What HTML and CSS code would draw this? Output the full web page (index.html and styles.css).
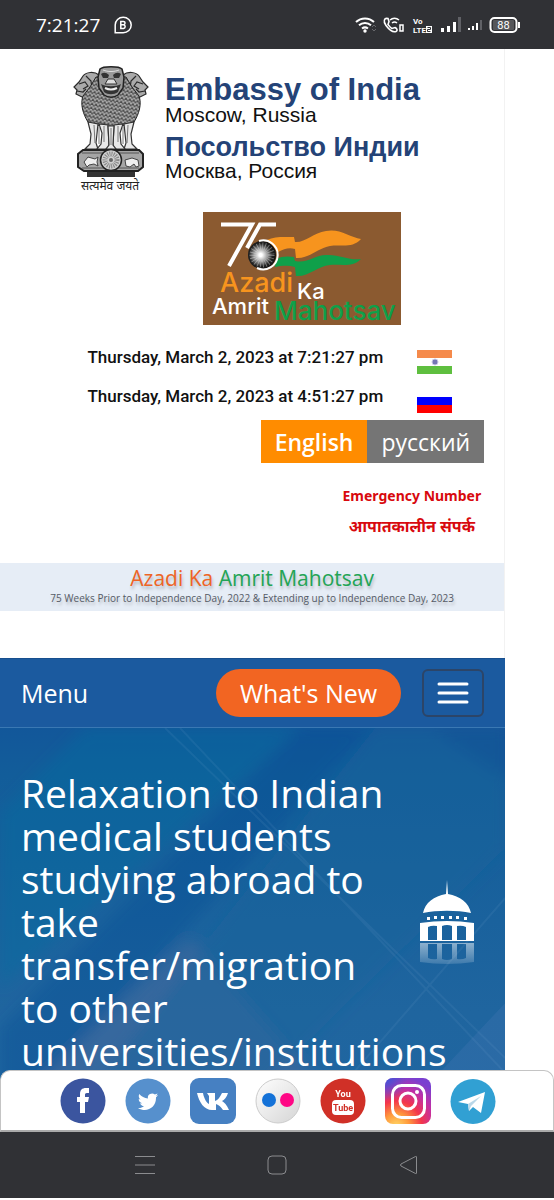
FILE: index.html
```html
<!DOCTYPE html>
<html lang="en">
<head>
    <meta charset="UTF-8">
    <meta name="viewport" content="width=device-width, initial-scale=1.0">
    <title>Embassy of India, Moscow</title>
    <link rel="stylesheet" href="styles.css">
</head>
<body>

    <!-- Status bar -->
    <div class="status-bar">
        <div class="status-left">
            <span class="status-time">7:21:27</span>
            <svg width="18" height="18" viewBox="0 0 18 18" fill="none" stroke="#fff" stroke-width="1.5">
                <path d="M1.2 16.8V9a8 7.8 0 1 1 8 7.8z"/>
                <path d="M6.8 5.400v7h2.900a1.900 1.900 0 0 0 0-3.700H6.800h2.600a1.600 1.600 0 0 0 0-3.300z"/>
            </svg>
        </div>
        <svg width="165" height="18" viewBox="0 0 165 18">
            <g fill="none" stroke="#fff" stroke-width="2">
                <path d="M1 6a13 13 0 0 1 18 0M4 9.300a9 9 0 0 1 12 0M7 12.500a5 5 0 0 1 6 0"/>
                <path d="M33 2.500c-4-1-5 3-2 7s7 7 10 6c2-1 1-3-1-4l-3 1c-2-1-3-3-4-4l1-3z" stroke-width="1.600"/>
                <path d="M35 4a7 7 0 0 1 9 0M37 7a4 4 0 0 1 5 0" stroke-width="1.500"/>
                <rect x="45" y="9" width="3" height="6" stroke-width="1.500"/>
                <rect x="135.500" y="2" width="26" height="14" rx="4"/>
            </g>
            <circle cx="10" cy="15" r="1.700" fill="#fff"/>
            <path d="M17 11l2-2 2 2M17 13l2 2 2-2" fill="none" stroke="#66676b"/>
            <g fill="#fff" class="tiny-bold">
                <text x="58" y="8">Vo</text>
                <text x="58" y="17">LTE</text>
                <rect x="71" y="10" width="6" height="7"/>
            </g>
            <path d="M72.500 11.500h3v2h-3v2h3" fill="none" stroke="#303135"/>
            <path d="M86 12h3v4h-3zM92 10h3v6h-3zM98 6h3v10h-3zM113 12h2v2h-2zM117 10h2v4h-2zM121 7h2v7h-2zM163 6h2v6h-2z" fill="#fff"/>
            <path d="M103 1h3v15h-3zM125 4h2v10h-2z" fill="#606166"/>
            <rect x="138" y="4" width="21" height="10" rx="1" fill="#55565a"/>
            <text class="battery" x="148.500" y="13" text-anchor="middle">88</text>
        </svg>
    </div>

    <main class="site">
        <header class="header">
            <div class="brand">
                <!-- State emblem -->
                <svg class="emblem" width="78" height="130" viewBox="0 0 78 130">
                    <defs>
                        <pattern id="mane" width="4" height="4" patternUnits="userSpaceOnUse" patternTransform="rotate(12)">
                            <rect width="4" height="4" fill="#4a4a4a"/>
                            <path d="M0 0l2 3 2-3" fill="none" stroke="#b5b5b5" stroke-width="1.200"/>
                        </pattern>
                    </defs>
                    <!-- side heads -->
                    <g fill="#aaa" stroke="#2a2a2a" stroke-width="1.200">
                        <path d="M27 11c-5-4-13-3-16 1l-4 6-5 5 3 3-1 4 6 3 9 2 9-6z"/>
                        <path d="M51 11c5-4 13-3 16 1l4 6 5 5-3 3 1 4-6 3-9 2-9-6z"/>
                        <path d="M7 20l6-2 3 4-5 3M71 20l-6-2-3 4 5 3M5 27l6 1 3-3M73 27l-6 1-3-3M14 12l5 5 1 8-3 6M64 12l-5 5-1 8 3 6" fill="none"/>
                    </g>
                    <!-- body and centre head -->
                    <path d="M24 13l-6 10-7 9c-3 8 0 18 5 26l8 3 15 2 15-2 8-3c5-8 8-18 5-26l-7-9-6-10z" fill="url(#mane)" stroke="#222"/>
                    <path d="M28 5c3-3 19-3 22 0l2 8-1 11-5 7c-4 3-10 3-14 0l-5-7-1-11z" fill="#999" stroke="#222" stroke-width="1.500"/>
                    <path d="M29 10q4-3 8 1l-1 3h-5zM49 10q-4-3-8 1l1 3h5z" fill="#333"/>
                    <path d="M36 15h6l3 5h-12z" fill="#ddd" stroke="#333"/>
                    <path d="M29 20c5 3 15 3 20 0l-3 8c-4 3-10 3-14 0z" fill="#333"/>
                    <path d="M33 24c4 2 8 2 12 0" stroke="#eee" stroke-width="2" fill="none"/>
                    <path d="M31 6c5 2 11 2 16 0" stroke="#ddd" fill="none"/>
                    <!-- legs -->
                    <g fill="#e8e8e8" stroke="#333" stroke-width="1.200">
                        <path d="M16 58l3 12-1 10-5 5h13l-2-6 2-19zM62 58l-3 12 1 10 5 5H52l2-6-2-19z"/>
                        <path d="M27 60l3 9-1 11-4 5h11l1-4-1-20zM51 60l-3 9 1 11 4 5H42l-1-4 1-20z"/>
                        <path d="M36 62l1 19-3 4h10l-3-4 1-19z"/>
                    </g>
                    <path d="M22 61l1 18M56 61l-1 18M32 62v16M46 62v16M39 64v17M27 62v18M51 62v18" stroke="#777"/>
                    <!-- abacus -->
                    <path d="M11 86h56l4 4v13l-5 4H12l-6-4V90z" fill="#a5a5a5" stroke="#222" stroke-width="2"/>
                    <path d="M10 89h57M10 104h57" stroke="#555"/>
                    <path d="M12 98l4-5 7 2 3-2-1 5 1 4-4-2-5 1-2 2zM54 102l-1-6 7-2 6 2 1 6-3 1-2-3-4 3z" fill="#eee" stroke="#444"/>
                    <circle cx="39" cy="96" r="10.500" fill="#d0d0d0" stroke="#222" stroke-width="1.500"/>
                    <circle cx="39" cy="96" r="6" fill="none" stroke="#888" stroke-width="5" stroke-dasharray="1 1"/>
                    <circle cx="39" cy="96" r="2" fill="#666"/>
                    <path d="M15 108h48v5H15z" fill="#333"/>
                    <text class="motto" x="38" y="126" text-anchor="middle">सत्यमेव जयते</text>
                </svg>
                <div class="brand-text">
                    <h1 class="brand-en">Embassy of India</h1>
                    <p class="brand-city">Moscow, Russia</p>
                    <h2 class="brand-ru" lang="ru">Посольство Индии</h2>
                    <p class="brand-city" lang="ru">Москва, Россия</p>
                </div>
            </div>

            <!-- 75 years logo -->
            <svg class="azadi-logo" width="198" height="113" viewBox="0 0 198 113">
                <defs>
                    <radialGradient id="wheel" cx="0.450" cy="0.500" r="0.550">
                        <stop offset="0.100" stop-color="#fff"/>
                        <stop offset="0.400" stop-color="#aaa"/>
                        <stop offset="0.750" stop-color="#222"/>
                        <stop offset="1" stop-color="#111"/>
                    </radialGradient>
                </defs>
                <rect width="198" height="113" fill="#8b5a30"/>
                <path d="M64 28c8-4 18-3 27-3l1 5c10 1 18-9 31-11 13-3 24 6 35 8-9 10-20 5-31 7-12 2-21 13-34 12l-1-9c-6-2-11 0-17 3z" fill="#f7941e"/>
                <path d="M73 47c6-3 12-3 18-2l1 4c12 3 20-6 31-6 13-1 24 6 35 4-9 9-20 5-31 6-13 1-21 12-34 11l-1-9c-7-2-14-1-20 0z" fill="#0fa04a"/>
                <circle cx="59" cy="43" r="14" fill="url(#wheel)"/>
                <g fill="none" stroke="#fff">
                    <circle cx="59" cy="43" r="9" stroke-width="7" stroke-dasharray="0.700 1.800" opacity="0.400"/>
                    <path d="M18 12.500h31L26 54M73 12.500H57L44 36" stroke-width="4"/>
                    <path d="M56 29a14.500 14.500 0 1 1-2 27" stroke-width="2"/>
                </g>
                <g class="azadi-text">
                    <text class="word-azadi" x="17" y="80">Azadi</text>
                    <text class="word-ka" x="94" y="87">Ka</text>
                    <text class="word-amrit" x="9" y="102">Amrit</text>
                    <text class="word-mahotsav" x="71" y="108">Mahotsav</text>
                </g>
            </svg>

            <div class="clocks">
                <div class="clock">
                    <time>Thursday, March 2, 2023 at 7:21:27 pm</time>
                    <svg width="35" height="24" viewBox="0 0 35 24">
                        <path d="M0 0h35v8H0z" fill="#f58a4b"/>
                        <path d="M0 16h35v8H0z" fill="#5fbf3f"/>
                        <circle cx="18" cy="12" r="3" fill="#7676b5" stroke="#c9c9e6"/>
                    </svg>
                </div>
                <div class="clock">
                    <time>Thursday, March 2, 2023 at 4:51:27 pm</time>
                    <svg width="35" height="24" viewBox="0 0 35 24">
                        <path d="M0 8h35v8H0z" fill="#00f"/>
                        <path d="M0 16h35v8H0z" fill="#f00"/>
                    </svg>
                </div>
            </div>

            <div class="languages">
                <button type="button" class="lang active">English</button>
                <button type="button" class="lang" lang="ru">русский</button>
            </div>

            <div class="emergency">
                <a href="#">Emergency Number</a>
                <a href="#" class="hindi" lang="hi">आपातकालीन संपर्क</a>
            </div>
        </header>

        <section class="banner">
            <h2><span class="orange">Azadi Ka</span> <span class="green">Amrit Mahotsav</span></h2>
            <p>75 Weeks Prior to Independence Day, 2022 &amp; Extending up to Independence Day, 2023</p>
        </section>

        <nav class="navbar">
            <span class="nav-title">Menu</span>
            <a href="#" class="whats-new">What's New</a>
            <button type="button" class="toggler" aria-label="Toggle navigation">
                <svg width="32" height="24" viewBox="0 0 32 24" stroke="#fff" stroke-width="3" stroke-linecap="round">
                    <path d="M2 3h28M2 12h28M2 21h28"/>
                </svg>
            </button>
        </nav>

        <section class="hero">
            <svg class="hero-bg" viewBox="0 0 505 360" preserveAspectRatio="none">
                <defs>
                    <filter id="soft"><feGaussianBlur stdDeviation="7"/></filter>
                </defs>
                <g filter="url(#soft)">
                    <path d="M85 0h215L0 260V85z" fill="#0e6da0" opacity="0.350"/>
                    <path d="M300 0h70L40 360H0v-60z" fill="#104a91" opacity="0.300"/>
                    <path d="M0 390l190-180 160 180z" fill="#6a6d9d" opacity="0.300"/>
                    <path d="M375 0h130v120L260 360H90z" fill="#17649b" opacity="0.400"/>
                    <path d="M430 0h90v60z" fill="#104a91" opacity="0.350"/>
                </g>
                <path d="M505 275v85h-80z" fill="#5c83bd" opacity="0.200"/>
                <path d="M165 0l340 330M180 0l325 345M505 170L340 360" fill="none" stroke="#8ab3d5" stroke-width="2" opacity="0.100"/>
            </svg>
            <h2>Relaxation to Indian medical students studying abroad to take transfer/migration to other universities/institutions</h2>
            <svg class="dome" width="54" height="84" viewBox="0 0 54 84">
                <defs>
                    <linearGradient id="fade" x1="0" y1="0" x2="0" y2="1">
                        <stop offset="0" stop-color="#fff" stop-opacity="0.500"/>
                        <stop offset="1" stop-color="#fff" stop-opacity="0.150"/>
                    </linearGradient>
                </defs>
                <path d="M27 0l1 14c12 2 21 9 23 19-14-3-34-3-48 0 2-10 11-17 23-19z" fill="#fff"/>
                <path d="M7 37h3v3H7zM14 36h3v3h-3zM21 36h3v3h-3zM29 36h3v3h-3zM36 36h3v3h-3zM44 37h3v3h-3z" fill="#fff"/>
                <path fill-rule="evenodd" d="M0 43q27-4 54 0v18H0zM8 60h9V46q-5-1-9 1zM22 60h10V46q-5-2-10 0zM37 60h9V47q-4-2-9-1z" fill="#fff"/>
                <path fill-rule="evenodd" d="M0 63h54v19q-27 4-54 0zM8 64v14q4 2 9 1V64zM22 64v15q5 2 10 0V64zM37 64v15q5 1 9-1V64z" fill="url(#fade)"/>
            </svg>
        </section>
    </main>

    <footer class="bottom">
        <div class="social">
            <a href="#" aria-label="Facebook">
                <svg width="46" height="46" viewBox="0 0 46 46">
                    <circle cx="23" cy="23" r="22.500" fill="#3b559f"/>
                    <path d="M20 35V24h-3v-5h3v-3c0-4 2-6 6-6h3v5h-2c-2 0-2 1-2 2v2h4l-1 5h-3v11z" fill="#fff"/>
                </svg>
            </a>
            <a href="#" aria-label="Twitter">
                <svg width="46" height="46" viewBox="0 0 46 46">
                    <circle cx="23" cy="23" r="22.500" fill="#5690cd"/>
                    <path d="M33 17c-1 .5-1.500.7-2.300.8 1-.6 1.500-1.300 1.800-2.200-.8.500-1.700.8-2.600 1a4.200 4.200 0 0 0-7 3.800c-3.500-.2-6.500-1.800-8.600-4.400-1 2-.6 4.300 1.300 5.600-.7 0-1.300-.2-1.900-.5 0 2 1.400 3.700 3.300 4.200-.6.100-1.300.1-1.900 0 .6 1.700 2 2.800 3.900 2.900-1.700 1.300-3.700 1.900-6 1.700 8 5 18 .4 18-9.800v-.8c.9-.7 1.500-1.400 2-2.300z" fill="#fff"/>
                </svg>
            </a>
            <a href="#" aria-label="VK">
                <svg width="46" height="46" viewBox="0 0 46 46">
                    <rect width="46" height="46" rx="9" fill="#4680c2"/>
                    <path d="M22 32C14 32 9 24 7 15h6c1 6 4 10 6 11v-8l-2-3h8v8c3-1 5-4 7-8h6c-1 4-4 7-6 8 2 1 5 4 7 9h-6c-2-3-4-5-7-6v6z" fill="#fff"/>
                </svg>
            </a>
            <a href="#" aria-label="Flickr">
                <svg width="46" height="46" viewBox="0 0 46 46">
                    <defs>
                        <linearGradient id="silver" x1="0" y1="0" x2="1" y2="1">
                            <stop offset="0" stop-color="#fff"/>
                            <stop offset="1" stop-color="#d5d5d5"/>
                        </linearGradient>
                    </defs>
                    <circle cx="23" cy="23" r="22" fill="url(#silver)" stroke="#ccc"/>
                    <circle cx="14" cy="22" r="7" fill="#1472d8"/>
                    <circle cx="32" cy="22" r="7" fill="#ff0785"/>
                </svg>
            </a>
            <a href="#" aria-label="YouTube">
                <svg width="46" height="46" viewBox="0 0 46 46">
                    <circle cx="23" cy="23" r="22.500" fill="#d03027"/>
                    <rect x="12" y="22" width="22" height="15" rx="4" fill="#fff"/>
                    <text class="yt" x="23" y="19" text-anchor="middle" fill="#fff">You</text>
                    <text class="yt" x="23" y="33" text-anchor="middle" fill="#d03027">Tube</text>
                </svg>
            </a>
            <a href="#" aria-label="Instagram">
                <svg width="46" height="46" viewBox="0 0 46 46">
                    <defs>
                        <radialGradient id="insta" cx="0.250" cy="1.050" r="1.100">
                            <stop offset="0" stop-color="#ffd866"/>
                            <stop offset="0.250" stop-color="#ff9a3c"/>
                            <stop offset="0.500" stop-color="#f3364b"/>
                            <stop offset="0.750" stop-color="#c32fa4"/>
                            <stop offset="1" stop-color="#7a3fd0"/>
                        </radialGradient>
                        <radialGradient id="insta-blue" cx="0" cy="0" r="0.500">
                            <stop offset="0" stop-color="#3b55d8"/>
                            <stop offset="1" stop-color="#3b55d8" stop-opacity="0"/>
                        </radialGradient>
                    </defs>
                    <rect width="46" height="46" rx="8" fill="url(#insta)"/>
                    <rect width="46" height="46" rx="8" fill="url(#insta-blue)"/>
                    <g fill="none" stroke="#fff" stroke-width="3">
                        <rect x="7.500" y="7.500" width="32" height="32" rx="9"/>
                        <circle cx="23" cy="23" r="8"/>
                    </g>
                    <circle cx="32" cy="14" r="2" fill="#fff"/>
                </svg>
            </a>
            <a href="#" aria-label="Telegram">
                <svg width="46" height="46" viewBox="0 0 46 46">
                    <circle cx="23" cy="23.500" r="22.500" fill="#31a0d3"/>
                    <path d="M8 24l27-10-4 21-8-6-4 4-1-7z" fill="#fff"/>
                    <path d="M18 26l13-8-10 10-2 5z" fill="#b9d7e8"/>
                </svg>
            </a>
        </div>
        <div class="system-nav">
            <svg width="20" height="20" viewBox="0 0 20 20"><path d="M0 1.500h20M0 10h20M0 18.500h20"/></svg>
            <svg width="20" height="20" viewBox="0 0 20 20"><rect x="1" y="1" width="18" height="18" rx="4"/></svg>
            <svg width="20" height="20" viewBox="0 0 20 20"><path d="M17.500 2v16q0 1-1 .500L2 11q-1-1 0-2L16.500 1.500q1-.5 1 .5z"/></svg>
        </div>
    </footer>

</body>
</html>
```
FILE: styles.css
```css
* {
    box-sizing: border-box;
}
body {
    margin: 0;
    height: 100vh;
    display: flex;
    flex-direction: column;
    overflow: hidden;
    background: #fff;
    font-family: "Open Sans", "Noto Sans", sans-serif;
}
h1, h2, p {
    margin: 0;
}
button {
    border: 0;
    font-family: inherit;
    cursor: pointer;
}
a {
    text-decoration: none;
}
svg {
    display: block;
    flex: none;
}

/* status bar */
.status-bar {
    display: flex;
    flex: none;
    align-items: center;
    justify-content: space-between;
    height: 49px;
    padding: 0 34px 0 36px;
    background: #303135;
    color: #fff;
}
.status-left {
    display: flex;
    align-items: center;
    gap: 14px;
}
.status-time {
    font-size: 19px;
}
.tiny-bold {
    font: bold 8px "Roboto", sans-serif;
}
.battery {
    font: 11px "Roboto", sans-serif;
    fill: #fff;
}

/* page */
.site {
    display: flex;
    flex: 1;
    flex-direction: column;
    width: 91.2%;
    min-height: 0;
    border-right: 1px solid #f2f2f2;
}
.header {
    display: flex;
    flex-direction: column;
    flex: none;
    padding: 15px 20px 0;
}
.brand {
    display: flex;
    gap: 15px;
    padding-left: 52px;
}
.emblem {
    overflow: visible;
}
.brand-text {
    padding-top: 11px;
    font-family: "Liberation Sans", Arial, sans-serif;
}
.brand-en,
.brand-ru {
    color: #244377;
    font-size: 31px;
    line-height: 29px;
}
.brand-ru {
    margin-top: 9px;
    font-size: 27px;
    line-height: 25px;
}
.brand-city {
    color: #111;
    font-size: 21px;
    line-height: 22px;
}
.motto {
    font: 12px "Noto Sans Devanagari", "Noto Sans", sans-serif;
    fill: #222;
}
.azadi-logo {
    align-self: center;
    margin-top: 18px;
    margin-left: 99px;
    overflow: visible;
}
.azadi-text {
    font-family: "Inter", sans-serif;
    font-weight: 500;
    fill: #fff;
}
.azadi-text .word-azadi {
    font-size: 27px;
    fill: #f7941e;
}
.word-ka, .word-amrit {
    font-size: 22px;
}
.azadi-text .word-mahotsav {
    font-size: 26px;
    fill: #0fa04a;
}

.clocks {
    display: flex;
    flex-direction: column;
    gap: 15px;
    align-self: flex-end;
    margin-top: 25px;
    padding-right: 32px;
}
.clock {
    display: flex;
    gap: 34px;
    color: #111;
    font: 500 17px/15px "Roboto", sans-serif;
}
.languages {
    display: flex;
    align-self: flex-end;
    margin-top: 7px;
}
.lang {
    height: 43px;
    padding: 0 14px;
    background: #757575;
    color: #fff;
    font-size: 23px;
}
.lang.active {
    background: #ff8c00;
    font-weight: 600;
}
.emergency {
    display: flex;
    flex-direction: column;
    align-items: center;
    align-self: flex-end;
    gap: 8px;
    margin-top: 22px;
    padding-right: 3px;
}
.emergency a {
    color: #d8090e;
    font: bold 14px/22px "Noto Sans", sans-serif;
}
.emergency .hindi {
    font-size: 16px;
}

/* banner */
.banner {
    flex: none;
    height: 48px;
    margin: 26px 0 47px;
    background: #e6edf6;
    text-align: center;
    text-shadow: 1px 3px 3px #b5bac2;
}
.banner h2 {
    padding-top: 2px;
    font-size: 21px;
    font-weight: 500;
    line-height: 26px;
}
.banner p {
    color: #555b66;
    font-size: 10px;
    line-height: 14px;
}
.orange {
    color: #ee6425;
}
.green {
    color: #23a455;
}

/* navbar */
.navbar {
    display: flex;
    flex: none;
    align-items: center;
    gap: 21px;
    height: 70px;
    margin-right: -1px;
    padding: 0 21px;
    border-top: 1px solid #174f8e;
    border-bottom: 1px solid #3a78b3;
    background: #1b5a9f;
}
.nav-title {
    margin-right: auto;
    color: #fff;
    font-size: 25px;
}
.whats-new {
    padding: 0 24px;
    border-radius: 24px;
    background: #f26522;
    color: #fff;
    font-size: 25px;
    line-height: 48px;
}
.toggler {
    display: flex;
    align-items: center;
    justify-content: center;
    width: 62px;
    height: 48px;
    border: 2px solid #2c4568;
    border-radius: 6px;
    background: none;
}

/* hero */
.hero {
    position: relative;
    display: flex;
    flex: 1;
    justify-content: space-between;
    min-height: 0;
    margin-right: -1px;
    padding: 43px 31px 0 21px;
    background: linear-gradient(#12579a, #125d9a 10%, #1f659f 60%, #2067a2);
    overflow: hidden;
}
.hero-bg {
    position: absolute;
    top: 0;
    left: 0;
    width: 100%;
    height: 360px;
}
.hero h2 {
    position: relative;
    width: 375px;
    color: #fff;
    font-size: 39px;
    font-weight: normal;
    line-height: 43px;
}
.dome {
    position: relative;
    margin-top: 109px;
}

/* social links and system navigation stay over the page */
.bottom {
    position: fixed;
    right: 0;
    bottom: 2px;
    left: 0;
    box-shadow: 0 2px #fff;
}
.social {
    display: flex;
    justify-content: center;
    gap: 19px;
    height: 62px;
    padding-top: 7px;
    padding-left: 2px;
    border: 1px solid #c4c4c4;
    border-bottom: 2px solid #aaa;
    border-radius: 10px 10px 0 0;
    background: #fff;
}
.yt {
    font: bold 9px "Roboto", sans-serif;
}
.system-nav {
    display: flex;
    align-items: center;
    justify-content: center;
    gap: 112px;
    height: 66px;
    background: #303135;
    fill: none;
    stroke: #8b8c8f;
}
```
